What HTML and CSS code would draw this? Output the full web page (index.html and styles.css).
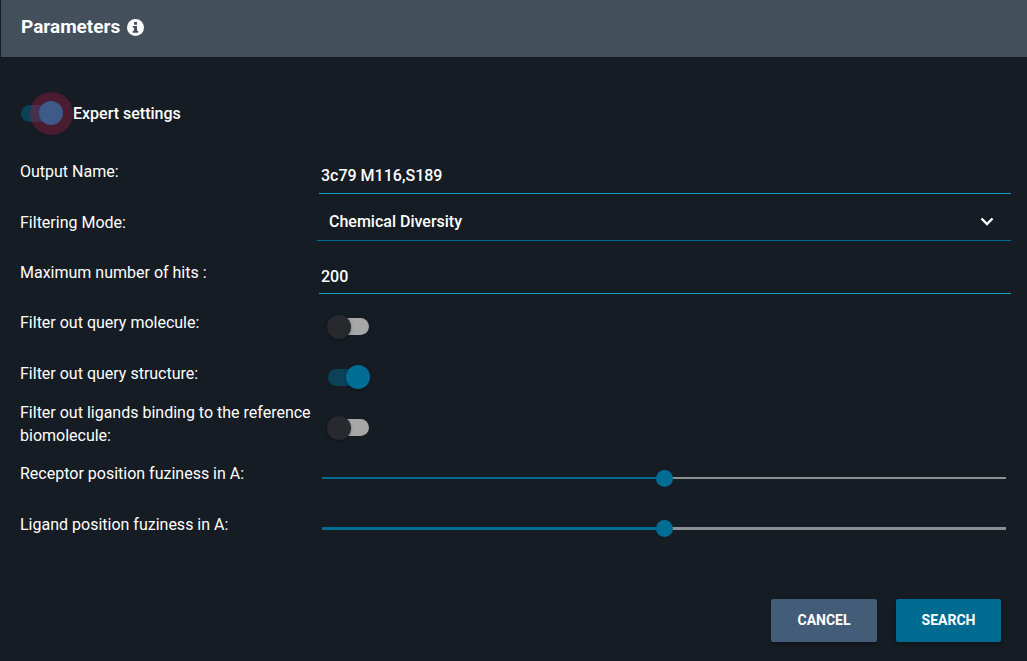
FILE: index.html
```html
<!DOCTYPE html>
<html lang="en">
<head>
<meta charset="utf-8">
<meta name="viewport" content="width=device-width, initial-scale=1">
<title>Parameters</title>
<link rel="stylesheet" href="styles.css">
</head>
<body>
<form class="dialog">
  <header class="dialog-header">
    <h1 class="title">Parameters</h1>
    <svg class="info" viewBox="0 0 16 16" aria-hidden="true"><circle cx="8" cy="8" r="8"/><path d="M6.600 2.800h2.800v2.500H6.600zM5.400 6.500h4v4.600h1.200v1.800H5.400v-1.800h1.200V8.300H5.400z"/></svg>
  </header>
  <main class="content">
    <label class="expert"><input class="switch focused" type="checkbox" checked>Expert settings</label>
    <div class="fields">
      <label class="label" for="name">Output Name:</label>
      <div class="control"><input class="text" id="name" type="text" value="3c79 M116,S189"></div>
      <label class="label" for="mode">Filtering Mode:</label>
      <div class="control select-wrap">
        <select class="select" id="mode"><option>Chemical Diversity</option></select>
        <svg class="chevron" viewBox="0 0 14 10" aria-hidden="true"><path d="M1.500 1.500L7 7l5.500-5.500"/></svg>
      </div>
      <label class="label" for="hits">Maximum number of hits :</label>
      <div class="control"><input class="text" id="hits" type="text" value="200"></div>
      <label class="label" for="molecule">Filter out query molecule:</label>
      <div class="control toggle"><input class="switch" id="molecule" type="checkbox"></div>
      <label class="label" for="structure">Filter out query structure:</label>
      <div class="control toggle"><input class="switch" id="structure" type="checkbox" checked></div>
      <label class="label" for="ligands">Filter out ligands binding to the reference biomolecule:</label>
      <div class="control toggle"><input class="switch" id="ligands" type="checkbox"></div>
      <label class="label" for="receptor">Receptor position fuziness in A:</label>
      <div class="control range"><input class="slider" id="receptor" type="range" min="0" max="2" step="0.1" value="1"></div>
      <label class="label" for="ligand">Ligand position fuziness in A:</label>
      <div class="control range"><input class="slider thick" id="ligand" type="range" min="0" max="2" step="0.1" value="1"></div>
    </div>
  </main>
  <footer class="actions">
    <button class="button cancel" type="button">CANCEL</button>
    <button class="button search" type="submit">SEARCH</button>
  </footer>
</form>
</body>
</html>
```
FILE: styles.css
```css
* { box-sizing: border-box; }
body {
  margin: 0;
  background: #151c23;
  color: #fff;
  font: 400 16px/23px Roboto, sans-serif;
}
input, select, button { margin: 0; font: inherit; color: inherit; }
.dialog { min-height: 100vh; display: flex; flex-direction: column; }
.dialog-header {
  display: flex;
  align-items: center;
  gap: 7px;
  height: 57px;
  margin-left: 1px;
  padding: 0 20px 4px;
  background: #434f5a;
}
.title { margin: 0; font-size: 19px; font-weight: 700; }
.info { width: 17px; height: 17px; margin-top: 2px; fill: #fff; }
.info path { fill: #434f5a; }
.content { padding: 0 16px 0 20px; }
.expert {
  display: flex;
  align-items: center;
  gap: 10px;
  height: 90px;
  padding: 23px 0 0 1px;
  font-weight: 500;
}
.fields {
  display: grid;
  grid-template-columns: 297px 1fr;
  grid-auto-rows: 1fr;
  min-height: 403px;
}
.label { align-self: center; padding: 0 4px 1px 0; }
.control { display: flex; align-items: center; min-width: 0; }
.text {
  width: 100%;
  height: 37px;
  margin: 6px 0 0 2px;
  padding: 3px 2px 1px;
  border: 0;
  border-bottom: 1px solid #10a0c8;
  outline: 0;
  background: none;
  font-weight: 500;
}
.select-wrap { position: relative; }
.select {
  width: 100%;
  height: 38px;
  margin-bottom: 2px;
  padding: 0 12px;
  appearance: none;
  border: 0;
  border-bottom: 1px solid #006b94;
  outline: 0;
  background: none;
  font-weight: 500;
}
.chevron {
  position: absolute;
  right: 17px;
  top: 20px;
  width: 14px;
  height: 10px;
  fill: none;
  stroke: #fff;
  stroke-width: 2.4;
  pointer-events: none;
}
.toggle { padding: 7px 0 0 11px; }
.switch {
  position: relative;
  flex: none;
  appearance: none;
  width: 42px;
  height: 17px;
  border-radius: 9px;
  background: #a7a7a7;
}
.switch::before {
  content: "";
  position: absolute;
  top: -3px;
  left: -1px;
  width: 24px;
  height: 24px;
  border-radius: 50%;
  background: #27292e;
  box-shadow: 0 1px 3px rgba(0, 0, 0, .35);
}
.switch:checked { background: #0c4259; }
.switch:checked::before { left: 18px; background: #006d94; }
.toggle .switch:checked::before { top: -4px; }
.toggle .switch:not(:checked) { width: 41px; }
.switch.focused::before { z-index: 1; background: #3e5a88; box-shadow: none; top: -4px; }
.switch.focused::after {
  content: "";
  position: absolute;
  top: -13px;
  left: 9px;
  width: 43px;
  height: 43px;
  border-radius: 50%;
  background: rgba(158, 27, 66, .4);
}
.range { padding: 8px 5px 0 5px; }
.slider {
  flex: 1;
  min-width: 0;
  height: 18px;
  appearance: none;
  background: linear-gradient(90deg, #006d94 50%, #8c9095 50%) center / 100% 2px no-repeat;
}
.slider.thick { background-size: 100% 3px; }
.slider::-webkit-slider-thumb {
  appearance: none;
  width: 17px;
  height: 17px;
  border-radius: 50%;
  background: #006d94;
}
.actions {
  display: flex;
  justify-content: flex-end;
  gap: 19px;
  margin-top: auto;
  padding: 0 26px 19px;
}
.button {
  width: 105px;
  height: 43px;
  border: 0;
  border-radius: 2px;
  box-shadow: 0 2px 5px rgba(0, 0, 0, .3);
  font-size: 14px;
  font-weight: 700;
}
.cancel { width: 106px; background: #435d78; }
.search { background: #006b90; }
```
